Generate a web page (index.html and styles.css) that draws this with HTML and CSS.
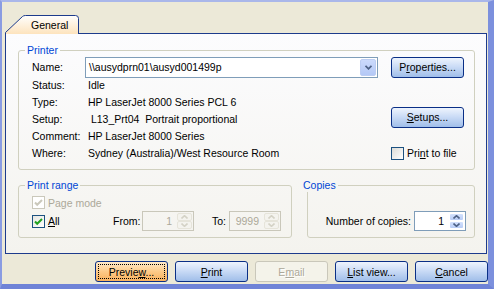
FILE: index.html
```html
<!DOCTYPE html>
<html lang="en">
<head>
    <meta charset="utf-8">
    <title>Print</title>
    <link rel="stylesheet" href="styles.css">
</head>
<body>
    <div class="window">
        <div class="tabs">
            <div class="tab">
                <svg class="tab-shape" width="74" height="20" viewBox="0 0 74 20">
                    <defs>
                        <linearGradient id="tabfill" x1="0" y1="0" x2="0" y2="1">
                            <stop offset="0" stop-color="#fffffe"/>
                            <stop offset="1" stop-color="#fde3bd"/>
                        </linearGradient>
                    </defs>
                    <path d="M0.5 20 V18.5 L17.5 2.5 Q18.5 1.5 20.5 1.5 H70.5 Q73.5 1.5 73.5 4.5 V20" fill="url(#tabfill)" stroke="#1d3b8c"/>
                </svg>
                <span class="tab-label">General</span>
            </div>
        </div>

        <div class="panel">
            <fieldset class="group printer">
                <legend>Printer</legend>
                <div class="printer-grid">
                    <span class="label">Name:</span>
                    <div class="combo">
                        <span class="combo-text">\\ausydprn01\ausyd001499p</span>
                        <span class="combo-btn">
                            <svg width="7" height="5" viewBox="0 0 7 5"><polyline points="0.5,0.8 3.5,3.8 6.5,0.8" fill="none" stroke="#4d6185" stroke-width="1.8"/></svg>
                        </span>
                    </div>
                    <button class="btn">P<u>r</u>operties...</button>

                    <span class="label">Status:</span>
                    <span class="value">Idle</span>

                    <span class="label">Type:</span>
                    <span class="value">HP LaserJet 8000 Series PCL 6</span>

                    <span class="label">Setup:</span>
                    <span class="value"> L13_Prt04  Portrait proportional</span>
                    <button class="btn btn-setups"><u>S</u>etups...</button>

                    <span class="label">Comment:</span>
                    <span class="value">HP LaserJet 8000 Series</span>

                    <span class="label">Where:</span>
                    <span class="value">Sydney (Australia)/West Resource Room</span>
                    <label class="check-row">
                        <span class="box"></span>
                        <span>Pri<u>n</u>t to file</span>
                    </label>
                </div>
            </fieldset>

            <div class="bottom-row">
                <fieldset class="group range">
                    <legend>Print range</legend>
                    <div class="check-row disabled">
                        <span class="box">
                            <svg width="9" height="9" viewBox="0 0 9 9"><polyline points="1,4.5 3.2,6.8 8,2" fill="none" stroke="#cac8bb" stroke-width="2"/></svg>
                        </span>
                        <span>Page mode</span>
                    </div>
                    <div class="all-row">
                        <div class="check-row all-check">
                            <span class="box checked">
                                <svg width="9" height="9" viewBox="0 0 9 9"><polyline points="1,4.5 3.2,6.8 8,2" fill="none" stroke="#21a121" stroke-width="2"/></svg>
                            </span>
                            <span><u>A</u>ll</span>
                        </div>
                        <span class="from-label">From:</span>
                        <div class="spin disabled">
                            <span class="spin-value">1</span>
                            <span class="spin-btns">
                                <span><svg width="7" height="4" viewBox="0 0 7 4"><polyline points="0.5,3.5 3.5,0.7 6.5,3.5" fill="none" stroke="#d4d2c6" stroke-width="1.6"/></svg></span>
                                <span><svg width="7" height="4" viewBox="0 0 7 4"><polyline points="0.5,0.5 3.5,3.3 6.5,0.5" fill="none" stroke="#d4d2c6" stroke-width="1.6"/></svg></span>
                            </span>
                        </div>
                        <span class="to-label">To:</span>
                        <div class="spin disabled">
                            <span class="spin-value">9999</span>
                            <span class="spin-btns">
                                <span><svg width="7" height="4" viewBox="0 0 7 4"><polyline points="0.5,3.5 3.5,0.7 6.5,3.5" fill="none" stroke="#d4d2c6" stroke-width="1.6"/></svg></span>
                                <span><svg width="7" height="4" viewBox="0 0 7 4"><polyline points="0.5,0.5 3.5,3.3 6.5,0.5" fill="none" stroke="#d4d2c6" stroke-width="1.6"/></svg></span>
                            </span>
                        </div>
                    </div>
                </fieldset>

                <fieldset class="group copies">
                    <legend>Copies</legend>
                    <div class="copies-row">
                        <span>Number of copies:</span>
                        <div class="spin">
                            <span class="spin-value">1</span>
                            <span class="spin-btns">
                                <span><svg width="7" height="4" viewBox="0 0 7 4"><polyline points="0.5,3.5 3.5,0.7 6.5,3.5" fill="none" stroke="#4d6185" stroke-width="1.6"/></svg></span>
                                <span><svg width="7" height="4" viewBox="0 0 7 4"><polyline points="0.5,0.5 3.5,3.3 6.5,0.5" fill="none" stroke="#4d6185" stroke-width="1.6"/></svg></span>
                            </span>
                        </div>
                    </div>
                </fieldset>
            </div>
        </div>

        <div class="footer">
            <button class="btn btn-focus">Previe<u>w</u>...</button>
            <button class="btn"><u>P</u>rint</button>
            <button class="btn" disabled>E<u>m</u>ail</button>
            <button class="btn"><u>L</u>ist view...</button>
            <button class="btn"><u>C</u>ancel</button>
        </div>
    </div>
</body>
</html>
```

FILE: styles.css
```css
* {
    margin: 0;
    padding: 0;
    box-sizing: border-box;
}

body {
    font-family: "Liberation Sans", Arial, sans-serif;
    font-size: 10.5px;
    color: #000;
    background: #ece9d8;
}

.window {
    width: 494px;
    height: 289px;
    border-style: solid;
    border-width: 2px 6px 5px 2px;
    border-color: #aab7ea #7c90dd #6f83d7 #8a9ce2;
    background: #ece9d8;
    display: flex;
    flex-direction: column;
}

/* Tab strip */
.tabs {
    display: flex;
    height: 20px;
    margin: 12px 0 0 3px;
    position: relative;
    z-index: 1;
}

.tab {
    position: relative;
    width: 74px;
    height: 20px;
    padding: 3px 0 0 26px;
    line-height: 17px;
}

.tab-shape {
    position: absolute;
    left: 0;
    top: 0;
}

.tab-label {
    position: relative;
}

.panel {
    margin: -1px 0 0 3px;
    width: 482px;
    height: 221px;
    border: 1px solid #1d3b8c;
    background: linear-gradient(#fcfcfe, #f4f3ee);
    padding: 10px 11px 0 12px;
}

/* Group boxes */
.group {
    border: 1px solid #d0d0bf;
    border-radius: 3px;
    min-width: 0;
}

.group legend {
    color: #0046d5;
    line-height: 13px;
    padding: 0 2px;
    margin-left: -7px;
}

.printer {
    padding: 0 10px 7px 13px;
}

.printer-grid {
    display: grid;
    grid-template-columns: 40px 293px 73px;
    grid-template-rows: 20px repeat(5, 17px);
    column-gap: 13px;
    align-items: center;
    line-height: 17px;
}

.label {
    grid-column: 1;
    white-space: nowrap;
}

.value {
    padding-left: 3px;
    white-space: pre;
}

.combo {
    display: flex;
    align-self: start;
    height: 21px;
    border: 1px solid #7f9db9;
    background: #fff;
    padding: 1px 1px 1px 3px;
}

.combo-text {
    flex: 1;
    line-height: 17px;
}

.combo-btn {
    width: 16px;
    display: flex;
    align-items: center;
    justify-content: center;
    background: linear-gradient(#cbdafc, #b4c8f6);
    border: 1px solid #bccdf3;
    border-radius: 2px;
}

.btn-setups {
    align-self: end;
}

/* Checkboxes */
.check-row {
    display: flex;
    align-items: center;
    gap: 3px;
    height: 17px;
}

.check-row.disabled {
    color: #aca899;
}

.box {
    width: 13px;
    height: 13px;
    border: 1px solid #1c5180;
    background: linear-gradient(135deg, #dcdcd7, #ffffff);
    display: flex;
    align-items: center;
    justify-content: center;
}

.box.checked {
    background: linear-gradient(135deg, #e6e6e1, #ffffff);
}

.check-row.disabled .box {
    border-color: #cac8bb;
    background: #fff;
}

/* Print range / copies */
.bottom-row {
    display: flex;
    gap: 15px;
    margin-top: 9px;
}

.range {
    width: 274px;
    padding: 2px 9px 6px 13px;
}

.copies {
    flex: 1;
    padding: 19px 8px 6px 0;
}

.all-row {
    display: flex;
    align-items: center;
    height: 20px;
}

.all-check {
    width: 81px;
}

.from-label {
    width: 29px;
}

.to-label {
    width: 17px;
    margin-left: 18px;
}

.copies-row {
    display: flex;
    justify-content: flex-end;
    align-items: center;
    gap: 3px;
    height: 20px;
}

.spin {
    display: flex;
    width: 52px;
    height: 20px;
    border: 1px solid #7f9db9;
    background: #fff;
    padding: 1px;
}

.spin-value {
    flex: 1;
    text-align: right;
    padding-right: 5px;
    line-height: 16px;
}

.spin-btns {
    width: 15px;
    display: flex;
    flex-direction: column;
}

.spin-btns span {
    flex: 1;
    display: flex;
    align-items: center;
    justify-content: center;
    background: linear-gradient(#d3e1fd, #b8ccf6);
    border: 1px solid #ffffff;
    border-radius: 2px;
}

.spin.disabled {
    border-color: #c9c7ba;
    background: transparent;
    color: #aca899;
}

.spin.disabled .spin-btns span {
    background: #f4f3ee;
    border-color: #e6e4da;
}

/* Buttons */
.btn {
    position: relative;
    width: 73px;
    height: 21px;
    border: 1px solid #0a2f86;
    border-radius: 3px;
    background: linear-gradient(#eef4fd, #cbdcf6 45%, #a0bee9);
    font: inherit;
    color: #000;
    padding: 0;
}

.btn-focus {
    background: linear-gradient(#ffeacb, #fdca88 50%, #f8b15e);
}

.btn-focus::after {
    content: '';
    position: absolute;
    top: 2px;
    left: 2px;
    right: 2px;
    bottom: 2px;
    border: 1px dotted #000;
}

.btn:disabled {
    border-color: #c9c7ba;
    background: #f4f3ea;
    color: #aca899;
    text-shadow: 1px 1px 0 #fff;
}

.footer {
    display: flex;
    justify-content: flex-end;
    gap: 7px;
    margin-top: 7px;
}
```
